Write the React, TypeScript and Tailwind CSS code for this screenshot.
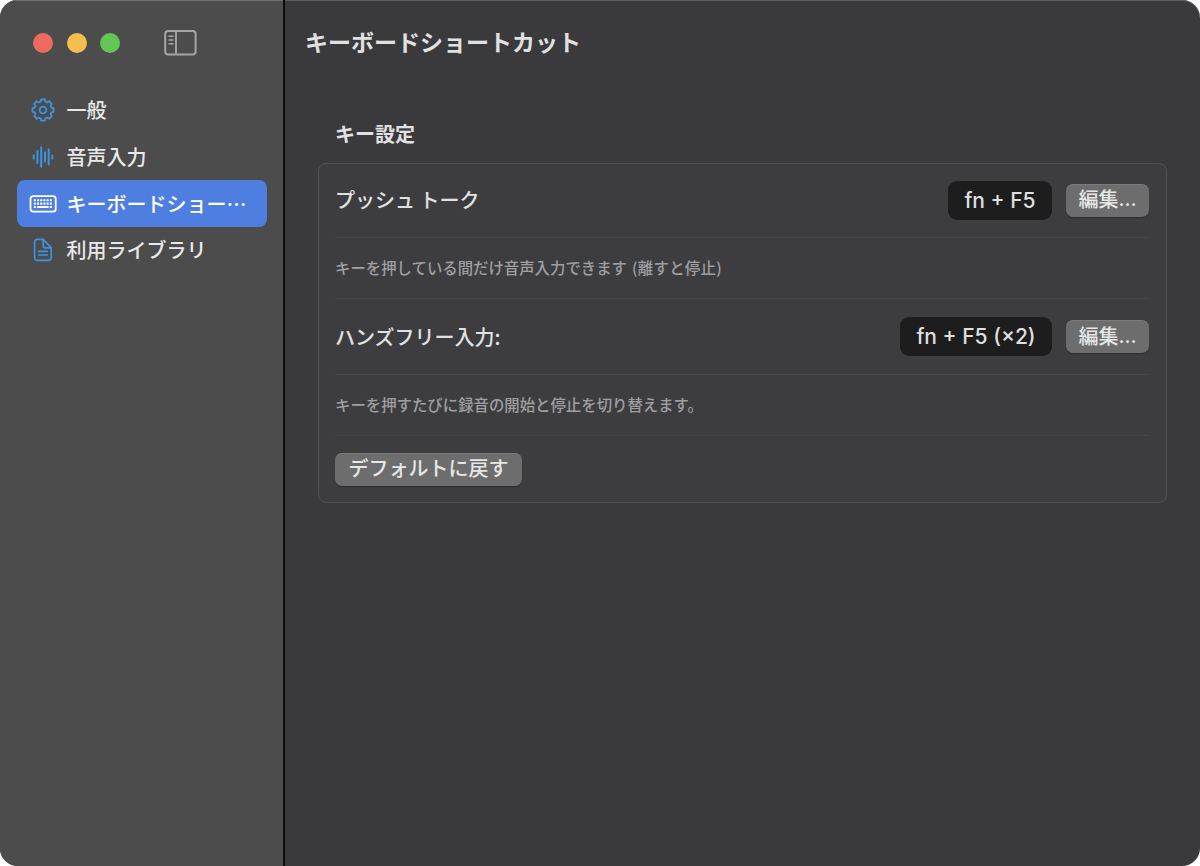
import type { ReactNode } from "react";

const JP = "font-['Noto_Sans_CJK_JP',sans-serif]";

function GearIcon() {
  const teeth = 8;
  const step = (Math.PI * 2) / teeth;
  const pt = (r: number, a: number) => `${(12 + r * Math.sin(a)).toFixed(2)} ${(12 - r * Math.cos(a)).toFixed(2)}`;
  let d = "";
  for (let i = 0; i < teeth; i++) {
    const a = i * step;
    d += `${i === 0 ? "M" : "L"}${pt(8.6, a - 0.29)}L${pt(10.7, a - 0.17)}L${pt(10.7, a + 0.17)}L${pt(8.6, a + 0.29)}`;
  }
  return (
    <svg width="24" height="24" viewBox="0 0 24 24" fill="none" stroke="currentColor" strokeWidth="1.8" strokeLinejoin="round">
      <path d={d + "Z"} />
      <circle cx="12" cy="12" r="3.4" />
    </svg>
  );
}

function WaveIcon() {
  return (
    <svg width="22" height="24" viewBox="0 0 22 24" fill="none" stroke="currentColor" strokeWidth="2" strokeLinecap="round">
      <path d="M1.7 10.4v3.2M5.4 6v12M9.2 2.2v19.6M13 7.4v9.2M16.7 4.4v15.2M20.3 10.4v3.2" />
    </svg>
  );
}

function KeyboardIcon() {
  const xs = [5.2, 8.4, 11.6, 14.8, 18, 21.2];
  return (
    <svg width="28" height="20" viewBox="0 0 28 20" fill="none">
      <g transform="translate(0.3 0.2)">
        <rect x="1.2" y="1.9" width="25.2" height="15.6" rx="2.6" stroke="currentColor" strokeWidth="1.8" />
        {[5, 8.4].map((y) => xs.map((x) => <rect key={`${x}-${y}`} x={x - 0.7} y={y} width="2.1" height="2.1" rx="0.3" fill="currentColor" />))}
        <rect x="4.5" y="11.8" width="2.1" height="2.1" rx="0.3" fill="currentColor" />
        <rect x="7.8" y="11.8" width="11.6" height="2.1" rx="0.3" fill="currentColor" />
        <rect x="20.5" y="11.8" width="2.1" height="2.1" rx="0.3" fill="currentColor" />
      </g>
    </svg>
  );
}

function DocIcon() {
  return (
    <svg width="20" height="24" viewBox="0 0 20 24" fill="none" stroke="currentColor" strokeWidth="1.7" strokeLinecap="round" strokeLinejoin="round">
      <path d="M10.2 1.4H4.2A2.6 2.6 0 0 0 1.6 4v15.8a2.6 2.6 0 0 0 2.6 2.6h11.4a2.6 2.6 0 0 0 2.6-2.6V9.8z" />
      <path d="M10.2 1.6v6.2a2 2 0 0 0 2 2h6M5.8 13.4h8.4M5.8 17h8.4" />
    </svg>
  );
}

function SidebarIcon() {
  return (
    <svg width="34" height="26" viewBox="0 0 34 26" fill="none" stroke="#a5a5a5">
      <rect x="1.2" y="1.1" width="30.4" height="23.4" rx="3" strokeWidth="2" />
      <path d="M12 1v23.6" strokeWidth="1.9" />
      <path d="M5 6.2h4M5 10h4M5 13.8h4" strokeWidth="1.4" strokeLinecap="round" />
    </svg>
  );
}

function NavItem({ icon, label, active = false }: { icon: ReactNode; label: string; active?: boolean }) {
  return (
    <div className={`flex h-[46.7px] items-center rounded-[8px] pl-[12px] ${active ? "bg-[#4e7ee0] text-white" : "text-[#e9e9e9]"}`}>
      <span className={`mr-[9.5px] flex w-[28px] shrink-0 justify-center ${active ? "text-white" : "text-[#3d93e3]"}`}>{icon}</span>
      <span className="text-[20px] leading-none font-medium whitespace-nowrap">{label}</span>
    </div>
  );
}

function PushButton({ children, className = "" }: { children: ReactNode; className?: string }) {
  return (
    <button
      className={`flex h-[33px] items-center justify-center rounded-[7px] bg-[#6d6d6e] pb-[2px] text-[20px] leading-none font-medium whitespace-nowrap text-[#e6e6e6] shadow-[0_1px_1px_rgba(0,0,0,0.3),inset_0_1px_0_rgba(255,255,255,0.1)] ${className}`}
    >
      {children}
    </button>
  );
}

function ShortcutRow({ label, keys, keysClass, height }: { label: string; keys: string; keysClass: string; height: string }) {
  return (
    <div className={`flex items-center ${height}`}>
      <span className="text-[20px] leading-none font-medium whitespace-nowrap">{label}</span>
      <span
        className={`ml-auto flex h-[39px] items-center justify-center rounded-[9px] bg-[#1d1d1e] font-['Inter',sans-serif] text-[21px] leading-none font-medium whitespace-nowrap text-[#dfdfdf] ${keysClass}`}
      >
        {keys}
      </span>
      <PushButton className="ml-[14px] w-[83px]">
        編集<span className="font-['Inter',sans-serif]">...</span>
      </PushButton>
    </div>
  );
}

const Divider = () => <div className="h-px bg-[#48484a]" />;

function Note({ children }: { children: ReactNode }) {
  return <p className="flex h-[60px] items-center pb-[1px] text-[15.4px] leading-none font-medium whitespace-nowrap text-[#9f9fa1]">{children}</p>;
}

export default function App() {
  return (
    <div className="h-[866px] w-[1200px] bg-white">
      <div className={`flex h-full overflow-hidden rounded-[18px] bg-[#3a3a3c] shadow-[inset_0_1px_0_#5c5c5c] ${JP}`}>
        <aside className="flex w-[285px] shrink-0 flex-col border-r-2 border-[#0c0c0c] bg-[#4c4c4c] shadow-[inset_0_1px_0_#707070]">
          <div className="flex h-[87px] items-center pb-[2px] pl-[33px]">
            <span className="size-[20px] rounded-full bg-[#ed6a5e]" />
            <span className="ml-[13.5px] size-[20px] rounded-full bg-[#f5bf4f]" />
            <span className="ml-[13.5px] size-[20px] rounded-full bg-[#62c554]" />
            <span className="ml-[43.5px]">
              <SidebarIcon />
            </span>
          </div>
          <nav className="flex flex-col pr-[16.5px] pl-[17px]">
            <NavItem icon={<GearIcon />} label="一般" />
            <NavItem icon={<WaveIcon />} label="音声入力" />
            <NavItem icon={<KeyboardIcon />} label="キーボードショー…" active />
            <NavItem icon={<DocIcon />} label="利用ライブラリ" />
          </nav>
        </aside>
        <main className="flex-1 text-[#e1e1e1]">
          <h1 className="flex h-[86px] items-center pb-[4px] pl-[20px] text-[23px] leading-none font-bold">キーボードショートカット</h1>
          <section className="pt-[29px] pr-[33.5px] pl-[33px]">
            <h2 className="flex h-[38px] items-center pl-[17px] text-[20px] leading-none font-bold">キー設定</h2>
            <div className="mt-[10px] rounded-[8px] border border-[#525254] bg-[#3d3d3f] pr-[16.5px] pl-[16px]">
              <ShortcutRow label="プッシュ トーク" keys="fn + F5" keysClass="w-[104px]" height="h-[73px] pb-[1px]" />
              <Divider />
              <Note>
                キーを押している間だけ音声入力できます<span className="ml-[5px] tracking-[0.3px]">(離すと停止)</span>
              </Note>
              <Divider />
              <ShortcutRow label="ハンズフリー入力:" keys="fn + F5 (×2)" keysClass="w-[152px]" height="h-[75px]" />
              <Divider />
              <Note>キーを押すたびに録音の開始と停止を切り替えます。</Note>
              <Divider />
              <div className="flex h-[66px] items-center">
                <PushButton className="w-[187px]">デフォルトに戻す</PushButton>
              </div>
            </div>
          </section>
        </main>
      </div>
    </div>
  );
}
